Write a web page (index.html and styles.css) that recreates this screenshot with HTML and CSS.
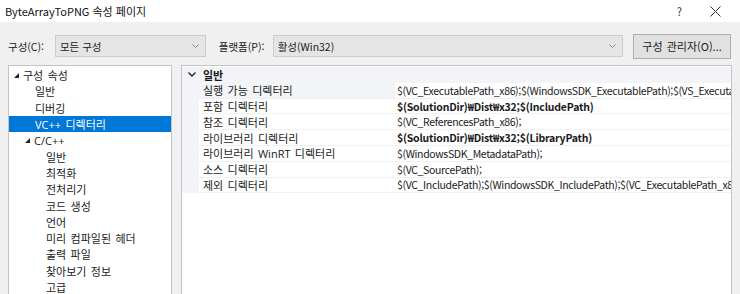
FILE: index.html
```html
<!DOCTYPE html>
<html lang="ko">
<head>
    <meta charset="UTF-8">
    <title>ByteArrayToPNG 속성 페이지</title>
    <link rel="stylesheet" href="styles.css">
</head>
<body>
    <div class="dialog">
        <div class="titlebar">
            <span class="title">ByteArrayToPNG 속성 페이지</span>
            <span class="help">?</span>
            <svg class="close" width="11" height="11" viewBox="0 0 11 11">
                <path d="M0.5 0.5 L10.5 10.5 M10.5 0.5 L0.5 10.5" stroke="#333" stroke-width="1" fill="none"/>
            </svg>
        </div>

        <div class="toolbar">
            <span class="label">구성(C):</span>
            <div class="combo combo-config">
                <span>모든 구성</span>
                <svg class="combo-arrow" width="7" height="4" viewBox="0 0 7 4"><path d="M0.5 0.5 L3.5 3.5 L6.5 0.5" stroke="#888" fill="none"/></svg>
            </div>
            <span class="label label-platform">플랫폼(P):</span>
            <div class="combo combo-platform">
                <span>활성(Win32)</span>
                <svg class="combo-arrow" width="7" height="4" viewBox="0 0 7 4"><path d="M0.5 0.5 L3.5 3.5 L6.5 0.5" stroke="#888" fill="none"/></svg>
            </div>
            <button class="manager">구성 관리자(O)...</button>
        </div>

        <div class="panes">
            <ul class="tree">
                <li class="node"><svg class="expander" width="5" height="5" viewBox="0 0 5 5"><path d="M5 0 L5 5 L0 5 Z" fill="#222"/></svg>구성 속성</li>
                <li class="lvl1">일반</li>
                <li class="lvl1">디버깅</li>
                <li class="lvl1 selected">VC++ 디렉터리</li>
                <li class="node lvl1-node"><svg class="expander" width="5" height="5" viewBox="0 0 5 5"><path d="M5 0 L5 5 L0 5 Z" fill="#222"/></svg>C/C++</li>
                <li class="lvl2">일반</li>
                <li class="lvl2">최적화</li>
                <li class="lvl2">전처리기</li>
                <li class="lvl2">코드 생성</li>
                <li class="lvl2">언어</li>
                <li class="lvl2">미리 컴파일된 헤더</li>
                <li class="lvl2">출력 파일</li>
                <li class="lvl2">찾아보기 정보</li>
                <li class="lvl2">고급</li>
            </ul>

            <div class="grid">
                <div class="row category">
                    <div class="gutter">
                        <svg width="8" height="5" viewBox="0 0 8 5"><path d="M0.5 0.5 L4 4 L7.5 0.5" stroke="#222" stroke-width="1.4" fill="none"/></svg>
                    </div>
                    <div class="cat-name">일반</div>
                </div>
                <div class="row current">
                    <div class="gutter"></div>
                    <div class="name">실행 가능 디렉터리</div>
                    <div class="value">$(VC_ExecutablePath_x86);$(WindowsSDK_ExecutablePath);$(VS_ExecutablePath);$(MSBuild_ExecutablePath)</div>
                </div>
                <div class="row">
                    <div class="gutter"></div>
                    <div class="name">포함 디렉터리</div>
                    <div class="value bold">$(SolutionDir)₩Dist₩x32;$(IncludePath)</div>
                </div>
                <div class="row">
                    <div class="gutter"></div>
                    <div class="name">참조 디렉터리</div>
                    <div class="value">$(VC_ReferencesPath_x86);</div>
                </div>
                <div class="row">
                    <div class="gutter"></div>
                    <div class="name">라이브러리 디렉터리</div>
                    <div class="value bold">$(SolutionDir)₩Dist₩x32;$(LibraryPath)</div>
                </div>
                <div class="row">
                    <div class="gutter"></div>
                    <div class="name">라이브러리 WinRT 디렉터리</div>
                    <div class="value">$(WindowsSDK_MetadataPath);</div>
                </div>
                <div class="row">
                    <div class="gutter"></div>
                    <div class="name">소스 디렉터리</div>
                    <div class="value">$(VC_SourcePath);</div>
                </div>
                <div class="row">
                    <div class="gutter"></div>
                    <div class="name">제외 디렉터리</div>
                    <div class="value">$(VC_IncludePath);$(WindowsSDK_IncludePath);$(VC_ExecutablePath_x86);$(VC_LibraryPath_x86)</div>
                </div>
            </div>
        </div>
    </div>
</body>
</html>
```

FILE: styles.css
```css
html, body {
    margin: 0;
    padding: 0;
    height: 100%;
    overflow: hidden;
}
body {
    font-family: "Noto Sans CJK KR", "Noto Sans", sans-serif;
    font-size: 10.5px;
    color: #1a1a1a;
    background-color: #f0f0f0;
}
.dialog {
    display: flex;
    flex-direction: column;
    height: 100%;
}

/* Title bar */
.titlebar {
    display: flex;
    align-items: center;
    height: 22px;
    background-color: #ffffff;
    padding-left: 5px;
    flex-shrink: 0;
}
.title {
    font-size: 11px;
    color: #111;
    flex: 1;
}
.help {
    font-size: 11px;
    color: #333;
    margin-right: 28px;
}
.close {
    margin-right: 19px;
}

/* Configuration row */
.toolbar {
    display: flex;
    align-items: center;
    margin: 12px 9px 0 8px;
    height: 24px;
    flex-shrink: 0;
}
.label {
    width: 47px;
}
.label-platform {
    width: 54px;
    margin-left: 13px;
}
.combo {
    display: flex;
    align-items: center;
    justify-content: space-between;
    box-sizing: border-box;
    height: 22px;
    padding: 0 6px 0 4px;
    background-color: #e5e5e5;
    border: 1px solid #cccccc;
}
.combo-config {
    width: 151px;
}
.combo-platform {
    width: 351px;
}
.manager {
    margin-left: 10px;
    box-sizing: border-box;
    width: 98px;
    height: 25px;
    padding: 0;
    font-family: inherit;
    font-size: 11px;
    word-spacing: 1px;
    color: #1a1a1a;
    background-color: #e1e1e1;
    border: 1px solid #adadad;
}

/* Panes */
.panes {
    display: flex;
    gap: 9px;
    margin: 7px 8px 0 8px;
    flex: 1;
}
.tree {
    list-style: none;
    margin: 0;
    padding: 1px 0 0 0;
    width: 164px;
    box-sizing: border-box;
    font-family: "Open Sans", "Noto Sans CJK KR", sans-serif;
    font-size: 11px;
    word-spacing: 1.5px;
    background-color: #ffffff;
    border: 1px solid #c4c4c4;
    border-bottom: none;
}
.tree li {
    display: flex;
    align-items: center;
    height: 16.3px;
    white-space: nowrap;
}
.node {
    padding-left: 5px;
}
.expander {
    margin-right: 4px;
}
.lvl1 {
    padding-left: 26px;
}
.lvl1-node {
    padding-left: 16px;
}
.lvl2 {
    padding-left: 37px;
}
.tree .selected {
    background-color: #0078d7;
    color: #ffffff;
}

/* Property grid */
.grid {
    flex: 1;
    background-color: #ffffff;
    border: 1px solid #c4c4c4;
    border-bottom: none;
    padding-top: 1px;
    overflow: hidden;
}
.row {
    display: flex;
    height: 15.8px;
    align-items: stretch;
    white-space: nowrap;
}
.gutter {
    width: 17px;
    flex-shrink: 0;
    background-color: #f2f4f8;
    display: flex;
    align-items: center;
    justify-content: center;
}
.category .gutter {
    padding-left: 2px;
    box-sizing: border-box;
}
.category {
    background-color: #f2f4f8;
}
.cat-name {
    font-weight: bold;
    font-size: 11px;
    padding-left: 4px;
    display: flex;
    align-items: center;
}
.name {
    width: 196px;
    flex-shrink: 0;
    box-sizing: border-box;
    padding-left: 4px;
    display: flex;
    align-items: center;
    font-family: "Open Sans", "Noto Sans CJK KR", sans-serif;
    font-size: 11px;
    word-spacing: 1.5px;
    border-bottom: 1px solid #f0f0f0;
}
.current .name {
    background-color: #f2f4f8;
}
.value {
    flex: 1;
    padding-left: 2px;
    display: flex;
    align-items: center;
    overflow: hidden;
    letter-spacing: -0.35px;
    border-bottom: 1px solid #f0f0f0;
}
.value.bold {
    font-weight: bold;
    letter-spacing: -0.2px;
}
```
